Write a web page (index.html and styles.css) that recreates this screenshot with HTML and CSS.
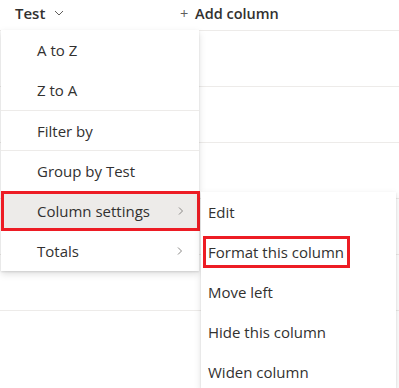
FILE: index.html
```html
<!DOCTYPE html>
<html>
<head>
    <title>List column menu</title>
    <link rel="stylesheet" href="styles.css">
</head>
<body>
    <div class="list">
        <div class="list-header">
            <div class="col-title">
                Test
                <svg class="down" width="12" height="12" viewBox="0 0 12 12"><path d="M2 4 L6 8 L10 4" fill="none" stroke="#605e5c" stroke-width="1"/></svg>
            </div>
            <div class="add-col"><span class="plus">+</span> Add column</div>
        </div>
        <div class="list-row"></div>
        <div class="list-row"></div>
        <div class="list-row"></div>
        <div class="list-row"></div>
        <div class="list-row"></div>
    </div>

    <!-- column header menu -->
    <ul class="menu main-menu">
        <li class="menu-item">A to Z</li>
        <li class="menu-item">Z to A</li>
        <li class="divider"></li>
        <li class="menu-item short">Filter by</li>
        <li class="divider"></li>
        <li class="menu-item">Group by Test</li>
        <li class="menu-item active marked">
            Column settings
            <svg class="chev" width="10" height="10" viewBox="0 0 10 10"><path d="M3 1.5 L6.5 5 L3 8.5" fill="none" stroke="#8a8886" stroke-width="1"/></svg>
        </li>
        <li class="menu-item">
            Totals
            <svg class="chev" width="10" height="10" viewBox="0 0 10 10"><path d="M3 1.5 L6.5 5 L3 8.5" fill="none" stroke="#8a8886" stroke-width="1"/></svg>
        </li>
    </ul>

    <!-- column settings submenu -->
    <ul class="menu sub-menu">
        <li class="menu-item">Edit</li>
        <li class="menu-item"><span class="marked-text">Format this column</span></li>
        <li class="menu-item">Move left</li>
        <li class="menu-item">Hide this column</li>
        <li class="menu-item">Widen column</li>
    </ul>
</body>
</html>
```

FILE: styles.css
```css
body {
    margin: 0;
    background: #fff;
    font-family: "Open Sans", "Noto Sans", sans-serif;
    color: #323130;
    width: 399px;
    height: 388px;
    overflow: hidden;
    position: relative;
}
.list-header {
    display: flex;
    align-items: center;
    height: 30px;
    border-bottom: 1px solid #edebe9;
    font-size: 14px;
    font-weight: 600;
}
.col-title {
    display: flex;
    align-items: center;
    gap: 8px;
    padding-left: 15px;
    width: 165px;
    margin-top: -4px;
    font-size: 15px;
}
.add-col {
    margin-top: -4px;
    font-size: 14.5px;
}
.plus {
    font-weight: 400;
    color: #605e5c;
    margin-right: 3px;
}
.list-row {
    height: 55px;
    border-bottom: 1px solid #edebe9;
}
.menu {
    position: absolute;
    list-style: none;
    margin: 0;
    padding: 0;
    background: #fff;
    box-shadow: 0 3.2px 7.2px rgba(0, 0, 0, 0.13), 0 0.6px 1.8px rgba(0, 0, 0, 0.11);
    font-size: 15px;
}
.main-menu {
    left: 1px;
    top: 30px;
    width: 198px;
}
.sub-menu {
    left: 201px;
    top: 192px;
    width: 195px;
    height: 196px;
}
.menu-item {
    display: flex;
    align-items: center;
    height: 40px;
    padding-left: 36px;
    padding-right: 12px;
}
.menu-item.short {
    height: 39px;
}
.sub-menu .menu-item {
    padding-left: 7px;
}
.divider {
    height: 1px;
    background: #edebe9;
}
.active {
    background: #edebe9;
}
.marked {
    outline: 3px solid #ed1c24;
    outline-offset: -3px;
    margin-right: -1px;
}
.chev {
    margin-left: auto;
    margin-right: 2px;
}
.marked-text {
    border: 3px solid #ed1c24;
    padding: 3px 3px 3px 2px;
    margin-left: -5px;
}
```
